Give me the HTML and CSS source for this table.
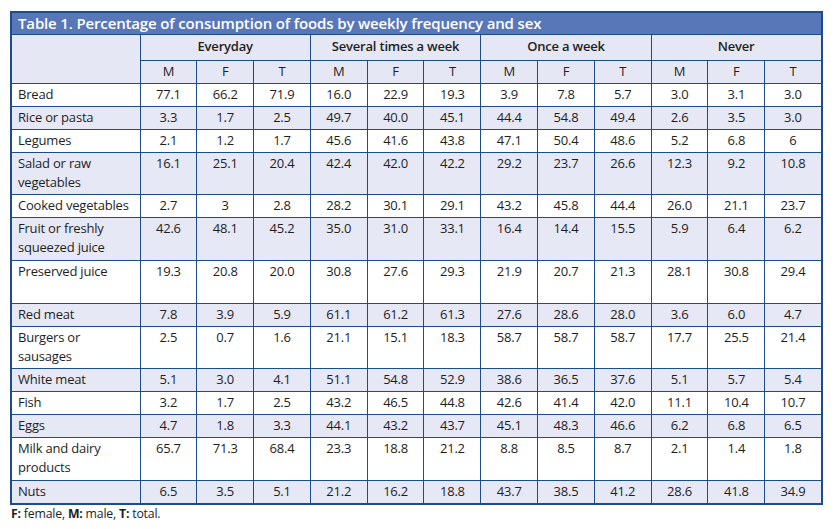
FILE: index.html
```html
<!DOCTYPE html>
<html lang="en">
<head>
<meta charset="utf-8">
<title>Table 1</title>
<link rel="stylesheet" href="styles.css">
</head>
<body>
<div class="page">
<table class="data">
<colgroup>
<col class="c-label">
<col span="12" class="c-num">
</colgroup>
<thead>
<tr class="title-row"><th colspan="13">Table 1. Percentage of consumption of foods by weekly frequency and sex</th></tr>
<tr class="group-row"><th rowspan="2"></th><th colspan="3">Everyday</th><th colspan="3">Several times a week</th><th colspan="3">Once a week</th><th colspan="3">Never</th></tr>
<tr class="sex-row"><th>M</th><th>F</th><th>T</th><th>M</th><th>F</th><th>T</th><th>M</th><th>F</th><th>T</th><th>M</th><th>F</th><th>T</th></tr>
</thead>
<tbody>
<tr><td>Bread</td><td>77.1</td><td>66.2</td><td>71.9</td><td>16.0</td><td>22.9</td><td>19.3</td><td>3.9</td><td>7.8</td><td>5.7</td><td>3.0</td><td>3.1</td><td>3.0</td></tr>
<tr class="alt"><td>Rice or pasta</td><td>3.3</td><td>1.7</td><td>2.5</td><td>49.7</td><td>40.0</td><td>45.1</td><td>44.4</td><td>54.8</td><td>49.4</td><td>2.6</td><td>3.5</td><td>3.0</td></tr>
<tr><td>Legumes</td><td>2.1</td><td>1.2</td><td>1.7</td><td>45.6</td><td>41.6</td><td>43.8</td><td>47.1</td><td>50.4</td><td>48.6</td><td>5.2</td><td>6.8</td><td>6</td></tr>
<tr class="alt"><td>Salad or raw vegetables</td><td>16.1</td><td>25.1</td><td>20.4</td><td>42.4</td><td>42.0</td><td>42.2</td><td>29.2</td><td>23.7</td><td>26.6</td><td>12.3</td><td>9.2</td><td>10.8</td></tr>
<tr><td>Cooked vegetables</td><td>2.7</td><td>3</td><td>2.8</td><td>28.2</td><td>30.1</td><td>29.1</td><td>43.2</td><td>45.8</td><td>44.4</td><td>26.0</td><td>21.1</td><td>23.7</td></tr>
<tr class="alt tall"><td>Fruit or freshly squeezed juice</td><td>42.6</td><td>48.1</td><td>45.2</td><td>35.0</td><td>31.0</td><td>33.1</td><td>16.4</td><td>14.4</td><td>15.5</td><td>5.9</td><td>6.4</td><td>6.2</td></tr>
<tr class="tall"><td>Preserved juice</td><td>19.3</td><td>20.8</td><td>20.0</td><td>30.8</td><td>27.6</td><td>29.3</td><td>21.9</td><td>20.7</td><td>21.3</td><td>28.1</td><td>30.8</td><td>29.4</td></tr>
<tr class="alt"><td>Red meat</td><td>7.8</td><td>3.9</td><td>5.9</td><td>61.1</td><td>61.2</td><td>61.3</td><td>27.6</td><td>28.6</td><td>28.0</td><td>3.6</td><td>6.0</td><td>4.7</td></tr>
<tr><td>Burgers or sausages</td><td>2.5</td><td>0.7</td><td>1.6</td><td>21.1</td><td>15.1</td><td>18.3</td><td>58.7</td><td>58.7</td><td>58.7</td><td>17.7</td><td>25.5</td><td>21.4</td></tr>
<tr class="alt"><td>White meat</td><td>5.1</td><td>3.0</td><td>4.1</td><td>51.1</td><td>54.8</td><td>52.9</td><td>38.6</td><td>36.5</td><td>37.6</td><td>5.1</td><td>5.7</td><td>5.4</td></tr>
<tr><td>Fish</td><td>3.2</td><td>1.7</td><td>2.5</td><td>43.2</td><td>46.5</td><td>44.8</td><td>42.6</td><td>41.4</td><td>42.0</td><td>11.1</td><td>10.4</td><td>10.7</td></tr>
<tr class="alt"><td>Eggs</td><td>4.7</td><td>1.8</td><td>3.3</td><td>44.1</td><td>43.2</td><td>43.7</td><td>45.1</td><td>48.3</td><td>46.6</td><td>6.2</td><td>6.8</td><td>6.5</td></tr>
<tr class="tall"><td>Milk and dairy products</td><td>65.7</td><td>71.3</td><td>68.4</td><td>23.3</td><td>18.8</td><td>21.2</td><td>8.8</td><td>8.5</td><td>8.7</td><td>2.1</td><td>1.4</td><td>1.8</td></tr>
<tr class="alt"><td>Nuts</td><td>6.5</td><td>3.5</td><td>5.1</td><td>21.2</td><td>16.2</td><td>18.8</td><td>43.7</td><td>38.5</td><td>41.2</td><td>28.6</td><td>41.8</td><td>34.9</td></tr>
</tbody>
</table>
<p class="note"><b>F:</b> female, <b>M:</b> male, <b>T:</b> total.</p>
</div>
</body>
</html>
```

FILE: styles.css
```css
html, body {
  margin: 0;
  padding: 0;
  background: #ffffff;
}

.page {
  padding: 11px 0 0 10px;
  font-family: "Open Sans", "Noto Sans", sans-serif;
  color: #1e1e1e;
}

.data {
  border-collapse: collapse;
  table-layout: fixed;
  width: 811px;
  border: 2px solid #1d4c8a;
  font-size: 13px;
  letter-spacing: -0.2px;
}

.c-label { width: 129px; }
.c-num { width: 56.8px; }

.data th,
.data td {
  border: 1px solid #1d4c8a;
  padding: 1px 6px 2px;
  line-height: 19px;
  vertical-align: top;
  text-align: center;
  font-weight: normal;
}

.data td:first-child {
  text-align: left;
}

.title-row th {
  background: #5877b9;
  color: #ffffff;
  text-align: left;
  font-weight: 600;
  font-size: 15px;
  letter-spacing: -0.15px;
  padding: 1px 6px 1px;
  line-height: 19px;
}

.group-row th {
  background: #e6e7f4;
  font-weight: 600;
  height: 23px;
  padding-top: 2px;
  padding-bottom: 0;
}

.sex-row th {
  background: #e6e7f4;
}

.alt td {
  background: #e7e8f5;
}

.tall td {
  height: 39px;
}

.note {
  margin: 0 0 0 1px;
  font-size: 12.3px;
  line-height: 18px;
  letter-spacing: -0.2px;
}

.note b {
  font-weight: 700;
}
```
